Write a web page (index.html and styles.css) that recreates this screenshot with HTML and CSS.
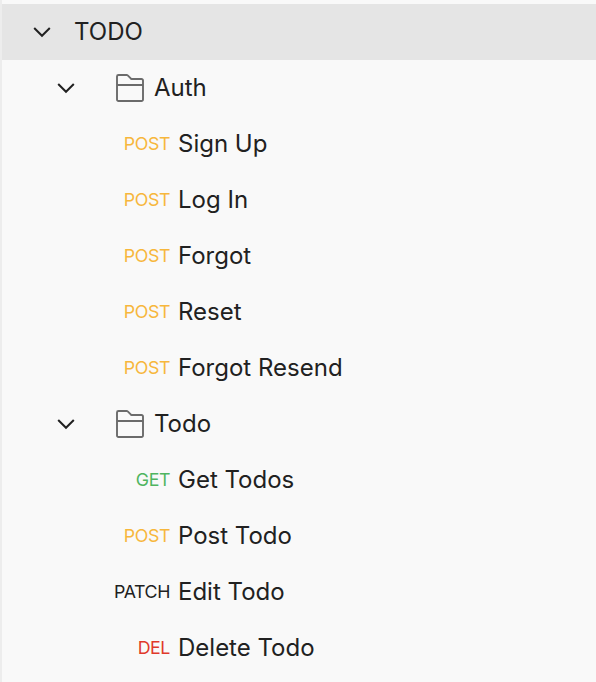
FILE: index.html
```html
<!DOCTYPE html>
<html lang="en">
<head>
<meta charset="utf-8">
<title>TODO</title>
<link rel="stylesheet" href="styles.css">
</head>
<body>
<svg class="defs" width="0" height="0">
  <symbol id="chevron" viewBox="0 0 20 12"><path d="M2.200 2l7.800 7.800 7.800-7.800" fill="none" stroke="currentColor" stroke-width="2"/></symbol>
  <symbol id="folder" viewBox="0 0 30 30"><path d="M2 26.500V3.500a1.500 1.500 0 0 1 1.500-1.500h8.200a1.500 1.500 0 0 1 1 .4l3 3a1.500 1.500 0 0 0 1 .6h9.800a1.500 1.500 0 0 1 1.500 1.500v19a1.500 1.500 0 0 1-1.500 1.500h-23a1.500 1.500 0 0 1-1.500-1.500zM2 12h26" fill="none" stroke="currentColor" stroke-width="1.900"/></symbol>
</svg>
<nav class="tree">
  <div class="row root"><svg class="chevron"><use href="#chevron"/></svg><span class="name">TODO</span></div>
  <div class="row group"><svg class="chevron"><use href="#chevron"/></svg><svg class="folder"><use href="#folder"/></svg><span class="name">Auth</span></div>
  <div class="row"><span class="method post">POST</span><span class="name">Sign Up</span></div>
  <div class="row"><span class="method post">POST</span><span class="name">Log In</span></div>
  <div class="row"><span class="method post">POST</span><span class="name">Forgot</span></div>
  <div class="row"><span class="method post">POST</span><span class="name">Reset</span></div>
  <div class="row"><span class="method post">POST</span><span class="name">Forgot Resend</span></div>
  <div class="row group"><svg class="chevron"><use href="#chevron"/></svg><svg class="folder"><use href="#folder"/></svg><span class="name">Todo</span></div>
  <div class="row"><span class="method get">GET</span><span class="name">Get Todos</span></div>
  <div class="row"><span class="method post">POST</span><span class="name">Post Todo</span></div>
  <div class="row"><span class="method patch">PATCH</span><span class="name">Edit Todo</span></div>
  <div class="row"><span class="method del">DEL</span><span class="name">Delete Todo</span></div>
</nav>
</body>
</html>
```
FILE: styles.css
```css
* { box-sizing: border-box; }
body {
  margin: 0;
  background: #f9f9f9;
  color: #212121;
  font: 24px/56px Inter, sans-serif;
}
.defs { display: block; }
.tree {
  min-height: 682px;
  padding-top: 4px;
  border-left: 2px solid #ededed;
}
.row {
  display: flex;
  align-items: center;
  height: 56px;
  white-space: nowrap;
}
.root { background: #e5e5e5; padding-left: 30px; }
.root .name { margin-left: 22px; }
.group { padding-left: 54px; }
.chevron { width: 20px; height: 12px; }
.folder { width: 30px; height: 30px; margin: 0 9px 0 39px; color: #6b6b6b; }
.method {
  width: 168px;
  margin-right: 8px;
  text-align: right;
  font-size: 17.800px;
  letter-spacing: -0.4px;
}
.post { color: #f7b73c; }
.get { color: #4fb560; }
.patch { color: #212121; }
.del { color: #e0392b; }
```
